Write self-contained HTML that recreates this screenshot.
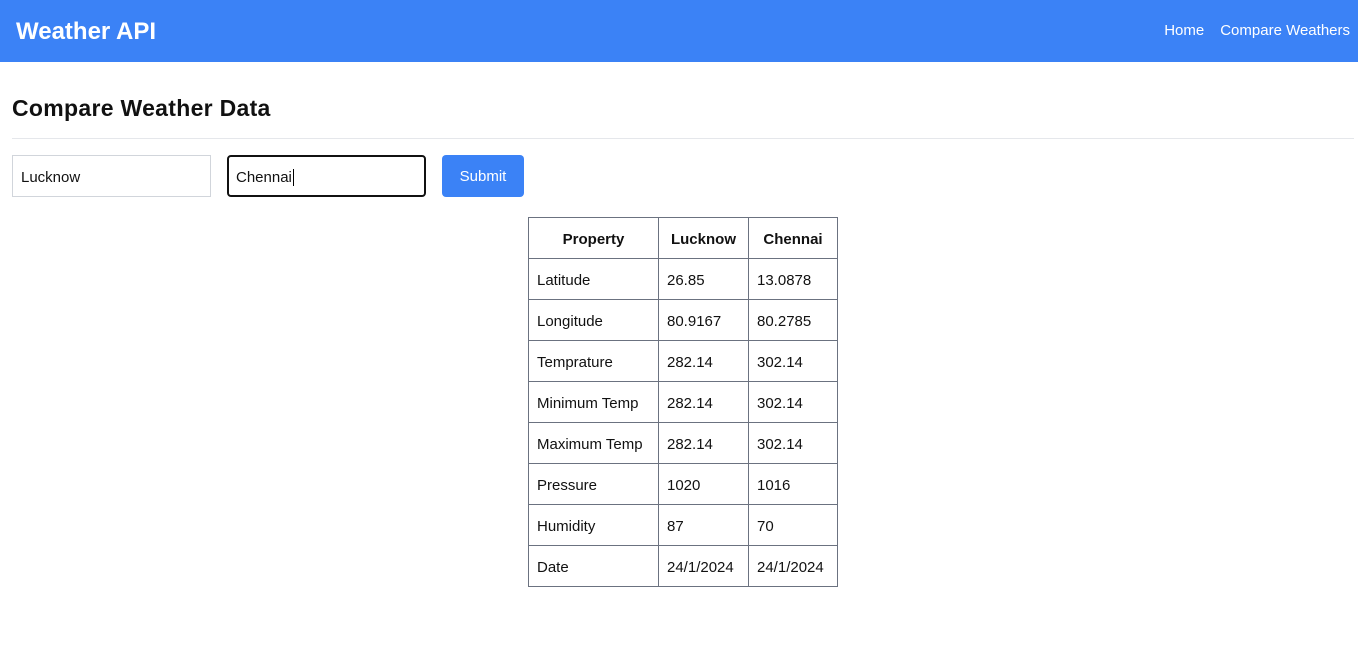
<!DOCTYPE html>
<html><head><meta charset="utf-8"><style>
*{box-sizing:border-box;margin:0;padding:0}
body{width:1358px;height:662px;background:#fff;font-family:"Liberation Sans",sans-serif;color:#111;position:relative;overflow:hidden}
.nav{position:absolute;left:0;top:0;width:1358px;height:62px;background:#3b82f6;color:#fff}
.brand{position:absolute;left:16px;top:18px;font-size:24px;font-weight:bold}
.links{position:absolute;right:8px;top:22px;font-size:15px}
.links span{margin-left:16px}
h2{position:absolute;left:12px;top:95px;font-size:23px;font-weight:bold;letter-spacing:0.3px}
.hr{position:absolute;left:12px;top:138px;width:1342px;height:1px;background:#e5e7eb}
.inp{position:absolute;top:155px;width:199px;height:42px;border:1px solid #d1d5db;font-size:15px;padding:13px 8px 0}
.btn{position:absolute;left:442px;top:155px;width:82px;height:42px;background:#3b82f6;border-radius:4px;color:#fff;font-size:15px;text-align:center;line-height:44px}
table{position:absolute;left:528px;top:217px;border-collapse:collapse;font-size:15px}
td,th{border:1px solid #6b7280;height:41px;padding:2px 8px 0;text-align:left;font-weight:normal}
th{font-weight:bold;text-align:center}
</style></head><body>
<div class="nav"><div class="brand">Weather API</div><div class="links"><span>Home</span><span>Compare Weathers</span></div></div>
<h2>Compare Weather Data</h2>
<div class="hr"></div>
<div class="inp" style="left:12px">Lucknow</div>
<div class="inp" style="left:227px;border:2px solid #111;border-radius:4px;padding:12px 7px 0">Chennai<span style="border-left:1px solid #000;margin-left:1px"></span></div>
<div class="btn">Submit</div>
<table>
<tr><th style="width:130px">Property</th><th style="width:90px">Lucknow</th><th style="width:89px">Chennai</th></tr>
<tr><td>Latitude</td><td>26.85</td><td>13.0878</td></tr>
<tr><td>Longitude</td><td>80.9167</td><td>80.2785</td></tr>
<tr><td>Temprature</td><td>282.14</td><td>302.14</td></tr>
<tr><td>Minimum Temp</td><td>282.14</td><td>302.14</td></tr>
<tr><td>Maximum Temp</td><td>282.14</td><td>302.14</td></tr>
<tr><td>Pressure</td><td>1020</td><td>1016</td></tr>
<tr><td>Humidity</td><td>87</td><td>70</td></tr>
<tr><td>Date</td><td>24/1/2024</td><td>24/1/2024</td></tr>
</table>
</body></html>
